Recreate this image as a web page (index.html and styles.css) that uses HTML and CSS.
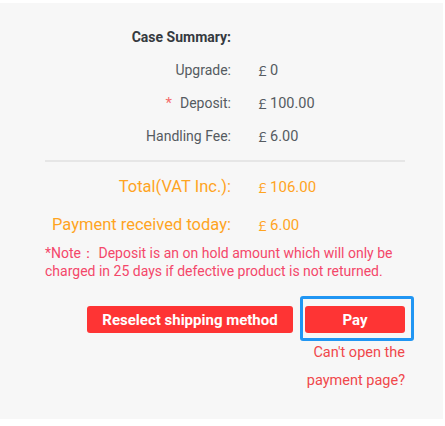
FILE: index.html
```html
<!DOCTYPE html>
<html lang="en">
<head>
    <meta charset="UTF-8">
    <meta name="viewport" content="width=device-width, initial-scale=1.0">
    <title>Case Summary</title>
    <link rel="stylesheet" href="styles.css">
</head>
<body>
    <div class="panel">
        <div class="summary">
            <div class="row">
                <span class="label title">Case Summary:</span>
                <span class="value"></span>
            </div>
            <div class="row">
                <span class="label">Upgrade:</span>
                <span class="value"><span class="pound">￡</span>0</span>
            </div>
            <div class="row">
                <span class="label"><span class="star">*</span>Deposit:</span>
                <span class="value"><span class="pound">￡</span>100.00</span>
            </div>
            <div class="row">
                <span class="label">Handling Fee:</span>
                <span class="value"><span class="pound">￡</span>6.00</span>
            </div>

            <div class="divider"></div>

            <div class="row big">
                <span class="label">Total(VAT Inc.):</span>
                <span class="value"><span class="pound">￡</span>106.00</span>
            </div>
            <div class="row big">
                <span class="label">Payment received today:</span>
                <span class="value"><span class="pound">￡</span>6.00</span>
            </div>

            <p class="note">*Note：&nbsp;Deposit is an on hold amount which will only be charged in 25 days if defective product is not returned.</p>

            <div class="actions">
                <button class="red-button reselect">Reselect shipping method</button>
                <button class="red-button pay">Pay</button>
            </div>
            <div class="help-link">Can't open the<br>payment page?</div>
        </div>
    </div>
</body>
</html>
```

FILE: styles.css
```css
:root {
    --panel-bg: #f7f7f7; --text-dark: #353a40; --text-label: #555b61;
    --orange: #ffa41f; --red: #fe3434; --note-red: #f4476a;
    --link-red: #f0484b; --focus-blue: #2196f3; --line: #e6e6e6;
}
body {
    margin: 0; padding: 3px 2px 7px 0; background: #fff;
    font-family: Roboto, "Noto Sans", sans-serif; font-size: 14px;
}
.panel { background: var(--panel-bg); height: 416px; box-sizing: border-box; padding: 17px 40px 0 45px; }
.summary { width: 360px; }
.row { display: grid; grid-template-columns: 186px 1fr; column-gap: 25px; height: 33px; align-items: center; color: var(--text-label); }
.label { text-align: right; }
.title { font-weight: 700; color: var(--text-dark); }
.value { color: var(--text-label); font-size: 14.5px; }
.pound { font-family: "Noto Sans CJK SC", sans-serif; font-size: 13px; margin-right: 1px; }
.star { color: #f56c6c; margin-right: 8px; font-size: 15px; }

.divider { height: 2px; background: var(--line); margin: 8px 0 5px; }

.row.big { height: 38px; font-size: 16.5px; color: var(--orange); }
.row.big .value { color: var(--orange); font-size: 15px; }

.note { margin: 1px 0 0; color: var(--note-red); font-size: 14px; line-height: 18px; }

.actions { display: flex; justify-content: flex-end; gap: 12px; margin-top: 26px; }
.red-button {
    height: 27px; border: none; border-radius: 3px; background: var(--red);
    color: #fff; font-family: Roboto, sans-serif; font-weight: 700; font-size: 15px;
    cursor: pointer; padding: 0;
}
.reselect { width: 206px; }
.pay { width: 100px; position: relative; }
.pay::after {
    content: ""; position: absolute; top: -10px; left: -5px; right: -9px; bottom: -8px;
    border: 3px solid var(--focus-blue); border-radius: 3px;
}
.help-link { text-align: right; color: var(--link-red); font-size: 14.5px; line-height: 28px; margin-top: 6px; }
```
